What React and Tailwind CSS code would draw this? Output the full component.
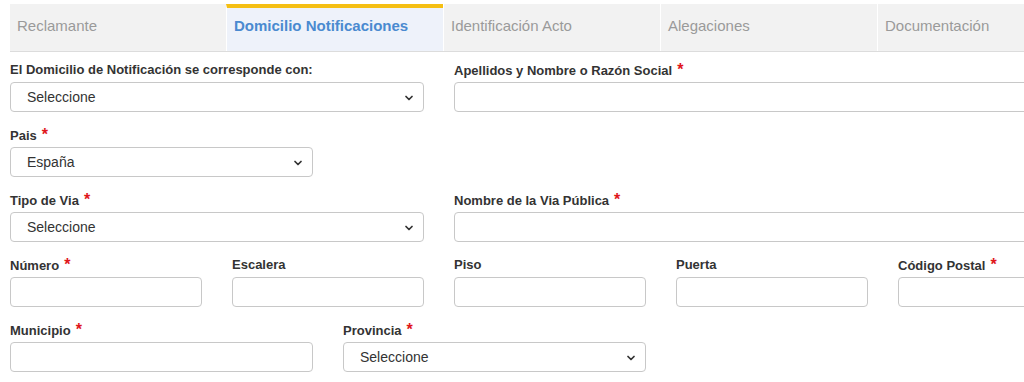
import { ChevronDown } from "lucide-react";

const tabs = [
  "Reclamante",
  "Domicilio Notificaciones",
  "Identificación Acto",
  "Alegaciones",
  "Documentación",
];

function Label({ text, required }) {
  return (
    <label className="block h-[18px] leading-[18px] mb-[3px] text-[13px] font-bold text-[#333]">
      {text}
      {required && <span className="ml-[5px] text-[16px] text-[#e0161b]">*</span>}
    </label>
  );
}

function Input() {
  return (
    <input
      type="text"
      className="block w-full h-[30px] rounded-[4px] border border-[#c8c8c8] bg-white px-3 text-[14px] text-[#333] outline-none"
    />
  );
}

function Select({ value }) {
  return (
    <div className="relative h-[30px]">
      <select
        defaultValue={value}
        className="block w-full h-[30px] appearance-none rounded-[4px] border border-[#c8c8c8] bg-white pl-[16px] pr-8 text-[14px] text-[#333] outline-none"
      >
        <option>{value}</option>
      </select>
      <ChevronDown
        size={12}
        strokeWidth={3.5}
        className="pointer-events-none absolute right-[9px] top-[10px] text-[#333]"
      />
    </div>
  );
}

function Field({ label, required, children, className }) {
  return (
    <div className={"mb-[14px] " + (className || "")}>
      <Label text={label} required={required} />
      {children}
    </div>
  );
}

export default function App() {
  return (
    <div
      className="w-[1024px] h-[382px] overflow-hidden bg-white"
      style={{ fontFamily: '"Liberation Sans", Arial, sans-serif' }}
    >
      <div className="w-[1084px] ml-[10px] mt-[4px]">
        <div className="flex h-[48px] bg-[#f2f2f2] border-b border-[#dcdcdc]">
          {tabs.map((t, i) => {
            const active = i === 1;
            return (
              <div
                key={t}
                className={
                  "flex-1 flex items-center pl-[7px] text-[15px] " +
                  (i > 0 ? "border-l border-white " : "") +
                  (active
                    ? "bg-[#eef2fa] border-t-4 border-t-[#f5bf13] font-bold text-[#4a8ad0] pb-[6px]"
                    : "text-[#9a9a9a] pb-[3px]")
                }
              >
                {t}
              </div>
            );
          })}
        </div>

        <div className="pt-[9px]">
          <div className="grid grid-cols-[414px_636px] gap-x-[30px]">
            <Field label="El Domicilio de Notificación se corresponde con:">
              <Select value="Seleccione" />
            </Field>
            <Field label="Apellidos y Nombre o Razón Social" required>
              <Input />
            </Field>
          </div>

          <Field label="Pais" required className="w-[303px]">
            <Select value="España" />
          </Field>

          <div className="grid grid-cols-[414px_636px] gap-x-[30px]">
            <Field label="Tipo de Via" required>
              <Select value="Seleccione" />
            </Field>
            <Field label="Nombre de la Via Pública" required>
              <Input />
            </Field>
          </div>

          <div className="grid grid-cols-[192px_192px_192px_192px_192px] gap-x-[30px]">
            <Field label="Número" required>
              <Input />
            </Field>
            <Field label="Escalera">
              <Input />
            </Field>
            <Field label="Piso">
              <Input />
            </Field>
            <Field label="Puerta">
              <Input />
            </Field>
            <Field label="Código Postal" required>
              <Input />
            </Field>
          </div>

          <div className="grid grid-cols-[303px_303px] gap-x-[30px]">
            <Field label="Municipio" required>
              <Input />
            </Field>
            <Field label="Provincia" required>
              <Select value="Seleccione" />
            </Field>
          </div>
        </div>
      </div>
    </div>
  );
}
